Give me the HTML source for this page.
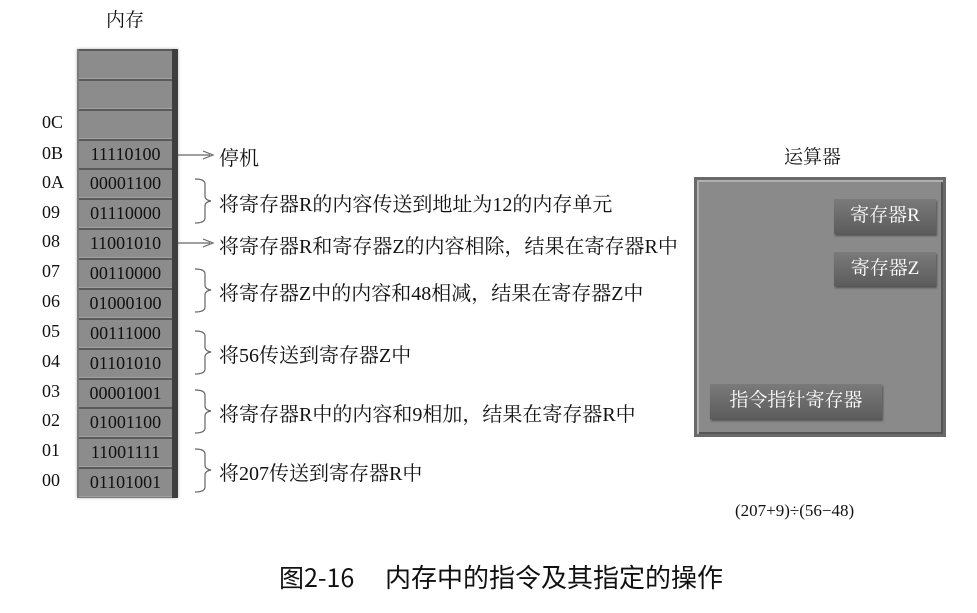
<!DOCTYPE html>
<html><head><meta charset="utf-8"><style>
body{margin:0;width:977px;height:613px;background:#fff;position:relative;overflow:hidden;font-family:"Liberation Serif","Noto Serif CJK SC",serif;color:#111}
.a{position:absolute;white-space:nowrap}
.lbl{font-size:18px;left:42px}
.col{position:absolute;left:77px;top:49px;width:101px;height:449px;background:#7a7a7a;box-shadow:0 0 3px rgba(0,0,0,.3)}
.col:after{content:"";position:absolute;right:0;top:0;width:6px;height:100%;background:#3e3e3e}
.cell{position:absolute;left:79px;width:93px;height:27px;background:#8c8c8c;border-top:2px solid #5a5a5a;border-bottom:1px solid #a0a0a0;font-size:18px;text-align:center;line-height:27px;color:#111}
.d{font-size:20px;left:219px}
.btn{position:absolute;background:linear-gradient(#7a7a7a,#5c5c5c);color:#fff;font-size:19px;line-height:34px;box-shadow:1px 2px 2px rgba(0,0,0,.4)}
.cap{font-family:'Noto Sans CJK SC',sans-serif;top:559px}
</style></head><body>
<div class="a" style="left:106px;top:5px;font-size:19px">内存</div>
<div class="col"></div>
<div class="cell" style="top:49px"></div>
<div class="cell" style="top:79px"></div>
<div class="cell" style="top:109px"></div>
<div class="cell" style="top:139px">11110100</div>
<div class="cell" style="top:168px">00001100</div>
<div class="cell" style="top:198px">01110000</div>
<div class="cell" style="top:228px">11001010</div>
<div class="cell" style="top:258px">00110000</div>
<div class="cell" style="top:288px">01000100</div>
<div class="cell" style="top:318px">00111000</div>
<div class="cell" style="top:348px">01101010</div>
<div class="cell" style="top:378px">00001001</div>
<div class="cell" style="top:407px">01001100</div>
<div class="cell" style="top:437px">11001111</div>
<div class="cell" style="top:467px">01101001</div>
<div class="a lbl" style="top:112px">0C</div>
<div class="a lbl" style="top:143px">0B</div>
<div class="a lbl" style="top:172px">0A</div>
<div class="a lbl" style="top:202px">09</div>
<div class="a lbl" style="top:231px">08</div>
<div class="a lbl" style="top:261px">07</div>
<div class="a lbl" style="top:291px">06</div>
<div class="a lbl" style="top:321px">05</div>
<div class="a lbl" style="top:351px">04</div>
<div class="a lbl" style="top:381px">03</div>
<div class="a lbl" style="top:410px">02</div>
<div class="a lbl" style="top:440px">01</div>
<div class="a lbl" style="top:470px">00</div>
<svg class="a" style="left:0;top:0" width="977" height="613">
<g stroke="#666" stroke-width="1.2" fill="none">
<path d="M178 155H210M203 151L213 155L203 159"/>
<path d="M178 243H210M203 239L213 243L203 247"/>
<path d="M195 179Q205 179 205 184V196Q205 200 211 201Q205 202 205 206V218Q205 223 195 223"/>
<path d="M195 269Q205 269 205 274V285Q205 289 211 290Q205 291 205 295V307Q205 312 195 312"/>
<path d="M195 331Q205 331 205 336V347Q205 351 211 352Q205 353 205 357V369Q205 374 195 374"/>
<path d="M195 390Q205 390 205 395V406Q205 410 211 411Q205 412 205 416V428Q205 433 195 433"/>
<path d="M195 449Q205 449 205 454V465Q205 469 211 470Q205 471 205 475V487Q205 492 195 492"/>
</g></svg>
<div class="a d" style="top:142px">停机</div>
<div class="a d" style="top:188px">将寄存器R的内容传送到地址为12的内存单元</div>
<div class="a d" style="top:230px">将寄存器R和寄存器Z的内容相除，结果在寄存器R中</div>
<div class="a d" style="top:277px">将寄存器Z中的内容和48相减，结果在寄存器Z中</div>
<div class="a d" style="top:339px">将56传送到寄存器Z中</div>
<div class="a d" style="top:398px">将寄存器R中的内容和9相加，结果在寄存器R中</div>
<div class="a d" style="top:457px">将207传送到寄存器R中</div>
<div class="a" style="left:784px;top:142px;font-size:19px">运算器</div>
<div class="a" style="left:694px;top:177px;width:246px;height:254px;background:#8a8a8a;border:3px solid #6a6a6a;box-shadow:inset 2px 2px 0 #b0b0b0,inset -2px -2px 0 #555"></div>
<div class="btn" style="left:834px;top:199px;width:102px;height:35px;text-align:center">寄存器R</div>
<div class="btn" style="left:834px;top:252px;width:102px;height:34px;text-align:center">寄存器Z</div>
<div class="btn" style="left:710px;top:384px;width:172px;height:35px;text-align:center">指令指针寄存器</div>
<div class="a" style="left:735px;top:501px;font-size:17px">(207+9)÷(56−48)</div>
<div class="a cap" style="left:279px;font-size:25px">图2-16</div>
<div class="a cap" style="left:385px;font-size:26px;top:558px">内存中的指令及其指定的操作</div>
</body></html>
